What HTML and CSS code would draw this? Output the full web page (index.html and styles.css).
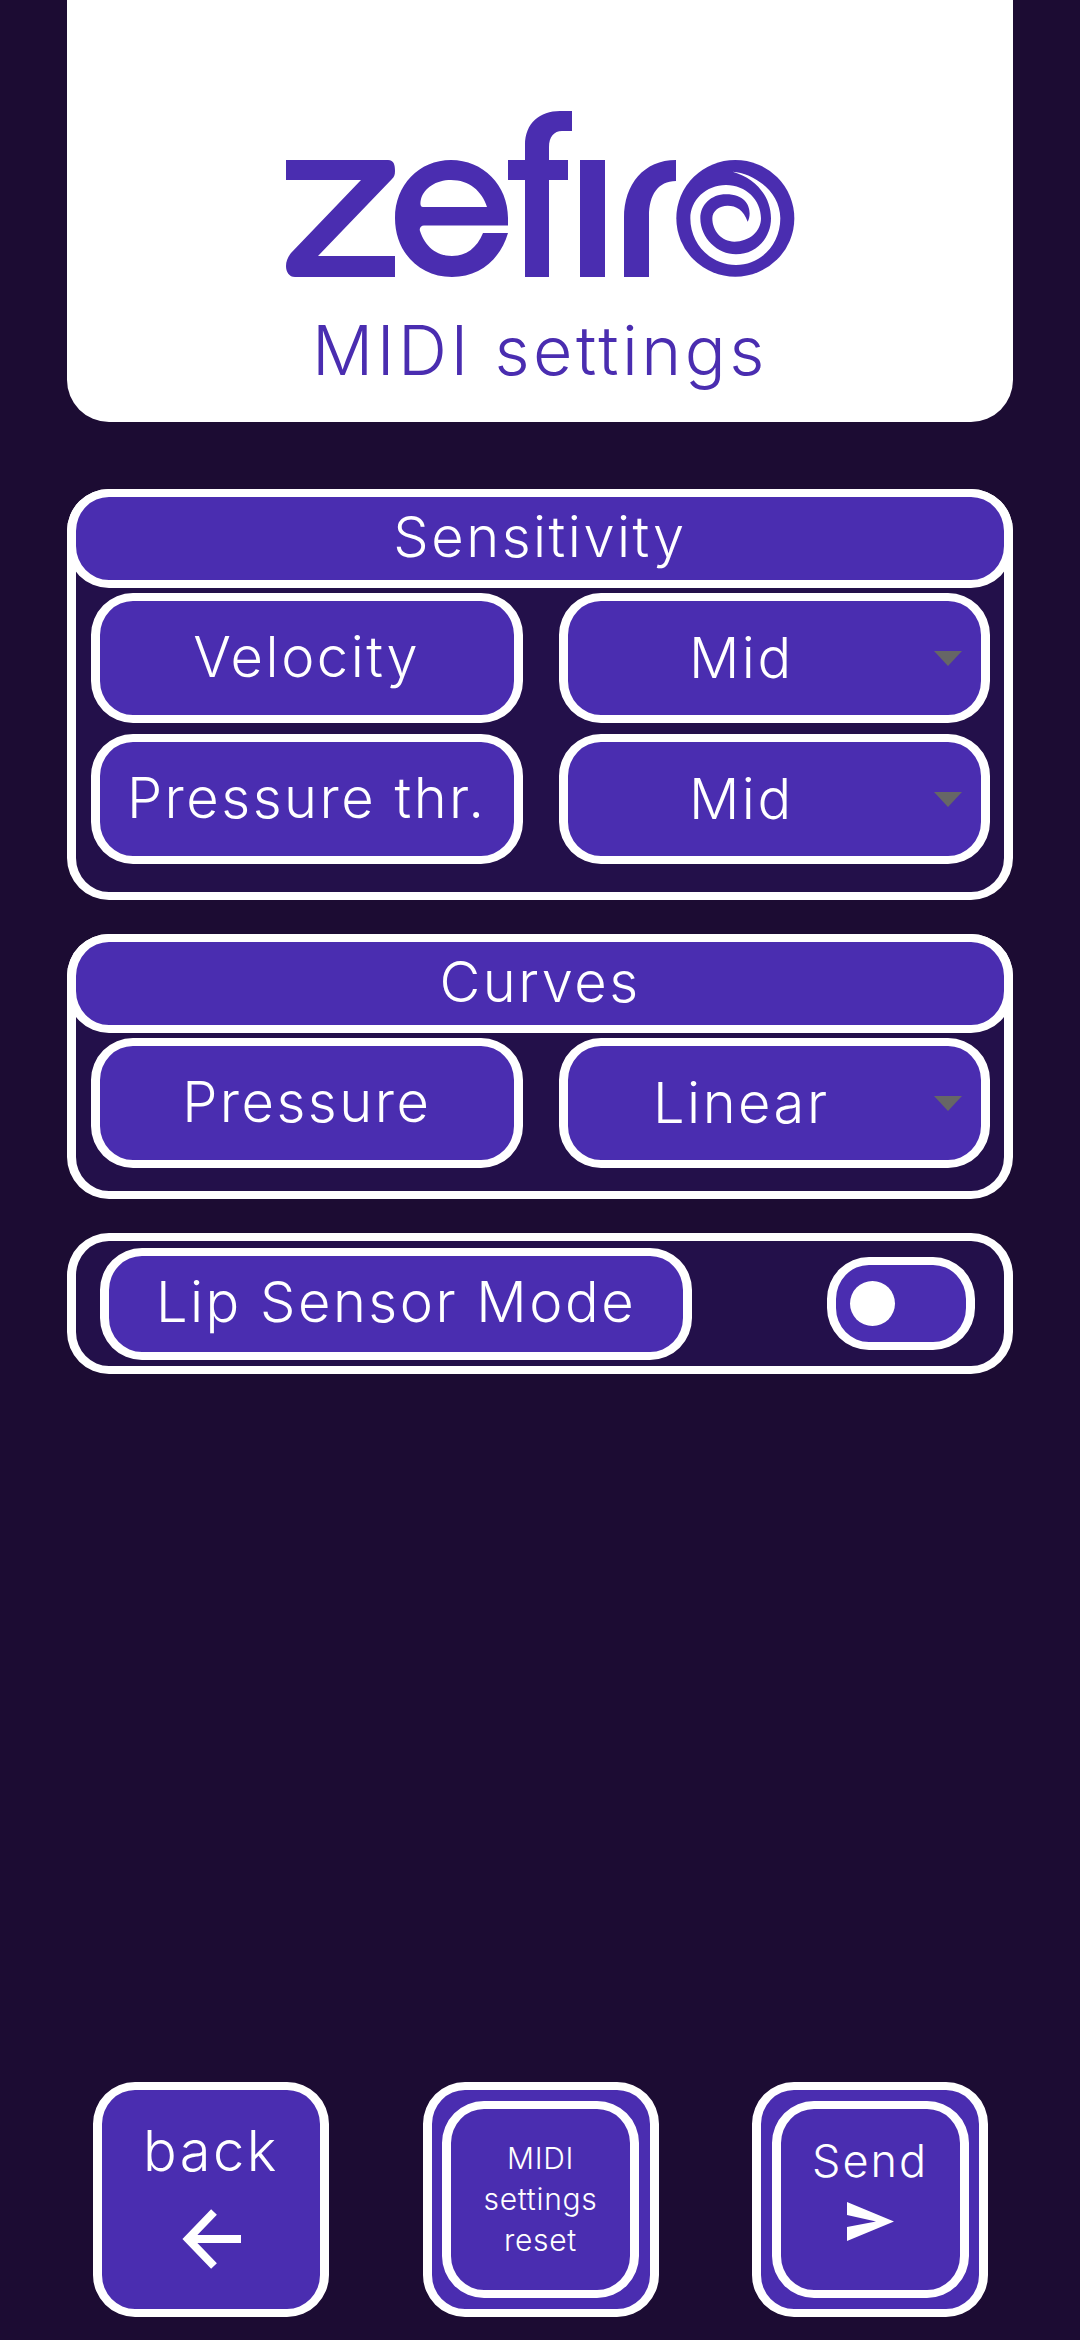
FILE: index.html
```html
<!DOCTYPE html>
<html lang="en">
<head>
  <meta charset="UTF-8">
  <title>Zefiro - MIDI settings</title>
  <meta name="viewport" content="width=device-width, initial-scale=1.0">
  <link rel="stylesheet" href="styles.css">
</head>
<body>
  <!-- Logo card -->
  <header class="logo-card">
    <svg class="logo" viewBox="0 0 509 166" role="img" aria-label="zefiro">
      <path d="M0 49 H102 C108 49 109 54 109 60 C109 64 108 66 106 68 L32 145 H109 V166 H9 C3 166 0 161 0 155 C0 150 2 146 5 142 L75 69 H0 Z"/>
      <path fill-rule="evenodd" d="M222 114.5 V107 C222 74 197 49 165 49 C133 49 109 74 109 107 C109 141 133 166 166 166 C193 166 214 149 222 122 H197 C191 137 180 145 166 145 C150 145 139 135 134 120 C133 117 135 114.5 138 114.5 Z M137 96 C134 96 134 92 135 88 C138 77 150 69 165 69 C183 69 196 80 201 96 Z"/>
      <path d="M239 166 V69 H222 V49 H239 V34 C239 12 254 0 274 0 H286 V20 H276 C268 20 263 26 263 36 V49 H282 V69 H263 V166 Z"/>
      <rect x="294" y="49" width="25" height="117"/>
      <path d="M338 166 V107 C338 73 358 49 390 49 V70 C372 70 363 84 363 105 V166 Z"/>
      <g transform="translate(385 44) scale(.3333)">
        <ellipse cx="193" cy="190" rx="177" ry="175"/>
        <path class="logo-cut" d="M185 50 C250 55 328 110 328 190 C328 268 270 330 195 330 C120 330 58 268 58 190 C58 135 105 90 165 90 C225 90 270 135 270 190 C270 230 235 260 190 260 C152 260 124 228 124 190 C124 168 145 152 170 152 C195 152 218 165 230 200 C243 178 240 118 165 118 C120 118 88 150 88 190 C88 250 140 298 195 298 C255 298 300 250 300 190 C300 125 255 70 185 50 Z"/>
      </g>
    </svg>
    <h1 class="page-title">MIDI settings</h1>
  </header>

  <main class="settings">
    <!-- Sensitivity -->
    <section class="panel panel-sensitivity">
      <h2 class="panel-title">Sensitivity</h2>
      <div class="field-grid">
        <div class="field field-label">Velocity</div>
        <div class="field select"><span class="select-value">Mid</span><i class="caret"></i></div>
        <div class="field field-label">Pressure thr.</div>
        <div class="field select"><span class="select-value">Mid</span><i class="caret"></i></div>
      </div>
    </section>

    <!-- Curves -->
    <section class="panel panel-curves">
      <h2 class="panel-title">Curves</h2>
      <div class="field-grid">
        <div class="field field-label">Pressure</div>
        <div class="field select"><span class="select-value">Linear</span><i class="caret"></i></div>
      </div>
    </section>

    <!-- Lip sensor -->
    <section class="panel panel-lip">
      <div class="field lip-label">Lip Sensor Mode</div>
      <div class="toggle"><span class="toggle-knob"></span></div>
    </section>
  </main>

  <!-- Bottom buttons -->
  <footer class="actions">
    <button class="action" type="button">
      <span class="action-text">back</span>
      <svg class="icon-back" viewBox="0 0 60 60"><path d="M60 30 H7 M33 3 L7 30 L33 57"/></svg>
    </button>
    <button class="action" type="button">
      <span class="action-inner action-small">MIDI<br>settings<br>reset</span>
    </button>
    <button class="action" type="button">
      <span class="action-inner">
        <span class="action-send">Send</span>
        <svg class="icon-send" viewBox="0 0 47 39"><path d="M0 0 L47 19.5 L0 39 V25 L29 19.5 L0 13 Z"/></svg>
      </span>
    </button>
  </footer>
</body>
</html>
```

FILE: styles.css
```css
/* Zefiro MIDI settings */
* {
  box-sizing: border-box;
}
body {
  margin: 0;
  width: 1080px;
  height: 2340px;
  display: flex;
  flex-direction: column;
  background: #1c0c33;
  color: #fff;
  font-family: Inter, "Noto Sans", sans-serif;
  font-weight: 300;
  font-size: 56px;
  letter-spacing: 2.5px;
}

/* Logo card */
.logo-card {
  margin: 0 67px;
  height: 422px;
  padding-top: 111px;
  background: #fff;
  border-radius: 0 0 42px 42px;
  display: flex;
  flex-direction: column;
  align-items: center;
}
.logo {
  width: 509px;
  height: 166px;
  fill: #4a2db0;
  flex: none;
}
.logo-cut {
  fill: #fff;
}
.page-title {
  margin: 33px 0 0;
  font-size: 68px;
  line-height: 80px;
  font-weight: 300;
  letter-spacing: 3.5px;
  color: #4a2db0;
}

/* Panels */
.settings {
  margin: 67px 67px 0;
  display: flex;
  flex-direction: column;
  gap: 34px;
}
.panel {
  border-style: solid;
  border-color: #fff;
  border-width: 8px 9px;
  border-radius: 42px;
  background: #23104a;
}
.panel-sensitivity {
  padding: 0 14px 28px 15px;
}
.panel-curves {
  padding: 0 14px 23px 15px;
}
.panel-title {
  margin: -8px -23px 5px -24px;
  height: 99px;
  border-style: solid;
  border-color: #fff;
  border-width: 8px 9px;
  border-radius: 42px;
  background: #4a2db0;
  font-size: 56px;
  font-weight: 300;
  line-height: 81px;
  text-align: center;
}
.field-grid {
  display: grid;
  grid-template-columns: 1fr 1fr;
  grid-auto-rows: 130px;
  column-gap: 36px;
  row-gap: 11px;
}
.field {
  border-style: solid;
  border-color: #fff;
  border-width: 8px 9px;
  border-radius: 42px;
  background: #4a2db0;
  display: flex;
  align-items: center;
  justify-content: center;
}
.field-label {
  padding-bottom: 3px;
}
.select-value {
  flex: 1;
  text-align: center;
}
.caret {
  flex: none;
  margin: 0 19px;
  border-top: 15px solid #666;
  border-left: 14px solid transparent;
  border-right: 14px solid transparent;
}

/* Lip sensor row */
.panel-lip {
  height: 141px;
  padding: 0 29px 0 24px;
  display: flex;
  align-items: center;
  justify-content: space-between;
}
.lip-label {
  width: 592px;
  height: 112px;
  padding-bottom: 3px;
}
.toggle {
  width: 148px;
  height: 93px;
  padding-left: 14px;
  border-style: solid;
  border-color: #fff;
  border-width: 8px 9px;
  border-radius: 42px;
  background: #4a2db0;
  display: flex;
  align-items: center;
}
.toggle-knob {
  width: 45px;
  height: 45px;
  border-radius: 50%;
  background: #fff;
}

/* Bottom buttons */
.actions {
  margin-top: auto;
  padding: 0 92px 23px 93px;
  display: flex;
  justify-content: space-between;
}
.action {
  width: 236px;
  height: 235px;
  padding: 0;
  border-style: solid;
  border-color: #fff;
  border-width: 8px 9px;
  border-radius: 42px;
  background: #4a2db0;
  color: inherit;
  font: inherit;
  letter-spacing: inherit;
  display: flex;
  flex-direction: column;
  align-items: center;
  justify-content: center;
}
.action-inner {
  width: 197px;
  height: 197px;
  border-style: solid;
  border-color: #fff;
  border-width: 8px 9px;
  border-radius: 42px;
  display: flex;
  flex-direction: column;
  align-items: center;
  justify-content: center;
}
.action-small {
  display: block;
  padding-top: 29px;
  font-size: 30px;
  line-height: 41px;
  letter-spacing: 0.7px;
  text-align: center;
}
.action-text {
  line-height: 60px;
}
.action-send {
  font-size: 45px;
  line-height: 56px;
  letter-spacing: 2px;
}
.icon-back {
  width: 60px;
  height: 60px;
  margin: 28px 0 10px;
  fill: none;
  stroke: #fff;
  stroke-width: 8;
}
.icon-send {
  width: 47px;
  height: 39px;
  margin: 13px 0 25px;
  fill: #fff;
}
```
